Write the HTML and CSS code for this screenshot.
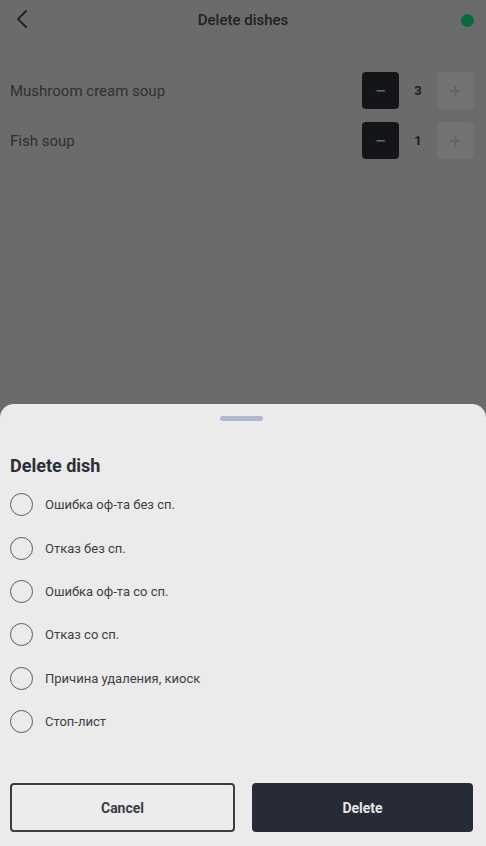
FILE: index.html
```html
<!DOCTYPE html>
<html lang="en">
<head>
    <meta charset="UTF-8">
    <meta name="viewport" content="width=device-width, initial-scale=1.0">
    <title>Delete dishes</title>
    <link rel="stylesheet" href="styles.css">
</head>
<body>
    <div class="screen">
        <div class="top-bar">
            <svg class="back" width="24" height="24" viewBox="0 0 24 24">
                <polyline points="14,3 6,11 14,19" fill="none" stroke="#4a4d55" stroke-width="2" stroke-linecap="round" stroke-linejoin="round"/>
            </svg>
            <div class="title">Delete dishes</div>
            <span class="status-dot"></span>
        </div>

        <div class="dish-list">
            <div class="dish-row">
                <span class="dish-name">Mushroom cream soup</span>
                <div class="counter">
                    <button class="count-btn minus">&minus;</button>
                    <span class="count">3</span>
                    <button class="count-btn plus">+</button>
                </div>
            </div>
            <div class="dish-row">
                <span class="dish-name">Fish soup</span>
                <div class="counter">
                    <button class="count-btn minus">&minus;</button>
                    <span class="count">1</span>
                    <button class="count-btn plus">+</button>
                </div>
            </div>
        </div>
    </div>

    <div class="overlay"></div>

    <div class="sheet">
        <div class="handle"></div>
        <h2 class="sheet-title">Delete dish</h2>
        <div class="reasons">
            <label class="reason"><span class="radio"></span>Ошибка оф-та без сп.</label>
            <label class="reason"><span class="radio"></span>Отказ без сп.</label>
            <label class="reason"><span class="radio"></span>Ошибка оф-та со сп.</label>
            <label class="reason"><span class="radio"></span>Отказ со сп.</label>
            <label class="reason"><span class="radio"></span>Причина удаления, киоск</label>
            <label class="reason"><span class="radio"></span>Стоп-лист</label>
        </div>
        <div class="actions">
            <button class="btn btn-cancel">Cancel</button>
            <button class="btn btn-delete">Delete</button>
        </div>
    </div>
</body>
</html>
```

FILE: styles.css
```css
body {
    margin: 0;
    height: 100vh;
    background: #ededed;
    font-family: Roboto, 'Noto Sans', sans-serif;
    overflow: hidden;
}
.screen {
    display: flex;
    flex-direction: column;
}
.top-bar {
    height: 40px;
    display: grid;
    grid-template-columns: 1fr auto 1fr;
    align-items: center;
    padding: 0 12px;
}
.back {
    display: block;
}
.title {
    font-size: 15px;
    font-weight: 500;
    color: #4a4a4a;
}
.status-dot {
    justify-self: end;
    width: 13px;
    height: 13px;
    border-radius: 50%;
    background: #18ec84;
}
.dish-list {
    padding: 32px 12px 0 10px;
    display: flex;
    flex-direction: column;
    gap: 13px;
}
.dish-row {
    display: flex;
    align-items: center;
    justify-content: space-between;
    height: 37px;
}
.dish-name {
    font-size: 15px;
    color: #6a6a6a;
}
.counter {
    display: flex;
    align-items: center;
}
.count-btn {
    width: 37px;
    height: 37px;
    border: none;
    border-radius: 4px;
    font-family: inherit;
    font-size: 20px;
    padding: 0;
}
.minus {
    background: #2e3039;
    color: #e8e8e8;
}
.plus {
    background: #ffffff;
    color: #dcdcdc;
}
.count {
    width: 38px;
    text-align: center;
    font-size: 13px;
    font-weight: 700;
    color: #444;
}
.overlay {
    position: fixed;
    inset: 0;
    background: rgba(0, 0, 0, 0.548);
}
.sheet {
    position: fixed;
    left: 0;
    right: 0;
    bottom: 0;
    height: 442px;
    box-sizing: border-box;
    background: #ebebeb;
    border-radius: 14px 14px 0 0;
    padding: 12px 13px 14px 10px;
    display: flex;
    flex-direction: column;
}
.handle {
    width: 43px;
    height: 5px;
    border-radius: 3px;
    background: #b3b6d0;
    align-self: center;
}
.sheet-title {
    margin: 33px 0 0 0;
    font-size: 18px;
    line-height: 24px;
    font-weight: 700;
    color: #2b2e37;
}
.reasons {
    margin-top: 5px;
    display: flex;
    flex-direction: column;
}
.reason {
    height: 43.4px;
    display: flex;
    align-items: center;
    gap: 12px;
    font-size: 13px;
    color: #3d3f45;
}
.radio {
    width: 23px;
    height: 23px;
    box-sizing: border-box;
    border: 1.5px solid #5a5b60;
    border-radius: 50%;
}
.actions {
    margin-top: auto;
    display: flex;
    gap: 17px;
}
.btn {
    flex: 1;
    height: 49px;
    border-radius: 4px;
    font-family: inherit;
    font-size: 14px;
    font-weight: 700;
}
.btn-cancel {
    background: #ececec;
    border: 2px solid #3a3d46;
    color: #3a3d46;
}
.btn-delete {
    background: #272b35;
    border: none;
    color: #e6e6e6;
}
```
